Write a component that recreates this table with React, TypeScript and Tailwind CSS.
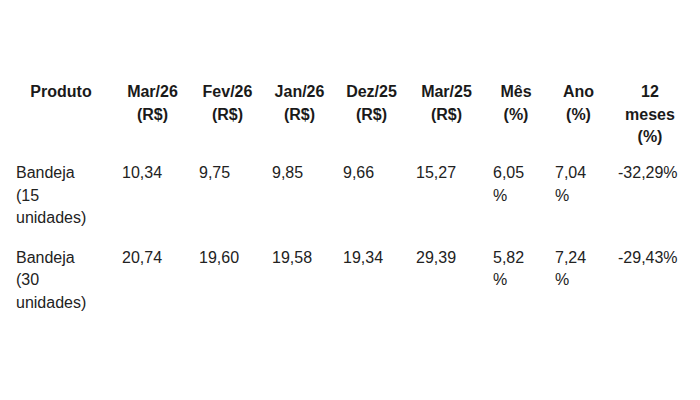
import React from "react";

const headers = [
  "Produto",
  "Mar/26 (R$)",
  "Fev/26 (R$)",
  "Jan/26 (R$)",
  "Dez/25 (R$)",
  "Mar/25 (R$)",
  "Mês (%)",
  "Ano (%)",
  "12 meses (%)",
];

const rows = [
  ["Bandeja (15 unidades)", "10,34", "9,75", "9,85", "9,66", "15,27", "6,05 %", "7,04 %", "-32,29%"],
  ["Bandeja (30 unidades)", "20,74", "19,60", "19,58", "19,34", "29,39", "5,82 %", "7,24 %", "-29,43%"],
];

const widths = ["w-[106px]", "w-[77px]", "w-[73px]", "w-[71px]", "w-[73px]", "w-[77px]", "w-[62px]", "w-[63px]", "w-[80px]"];

export default function App() {
  return (
    <div className="w-[700px] h-[400px] bg-white overflow-hidden" style={{ fontFamily: '"Liberation Sans", Arial, sans-serif' }}>
      <table className="table-fixed border-collapse ml-[8px] mt-[73px] w-[682px] text-[16px] leading-[22.5px] text-[#222]">
        <colgroup>
          {widths.map((w, i) => (
            <col key={i} className={w} />
          ))}
        </colgroup>
        <thead>
          <tr>
            {headers.map((h, i) => (
              <th key={i} className="align-top text-center font-bold px-[8px] pt-[8px] pb-[5px] text-[#1a1a1a]">
                {h}
              </th>
            ))}
          </tr>
        </thead>
        <tbody>
          {rows.map((r, ri) => (
            <tr key={ri}>
              {r.map((c, ci) => (
                <td
                  key={ci}
                  className={
                    ci === 0
                      ? "align-top text-left font-normal pl-[8px] pr-[14px] py-[8.5px]"
                      : "align-top text-left font-normal px-[8px] py-[8.5px]"
                  }
                >
                  {c}
                </td>
              ))}
            </tr>
          ))}
        </tbody>
      </table>
    </div>
  );
}
